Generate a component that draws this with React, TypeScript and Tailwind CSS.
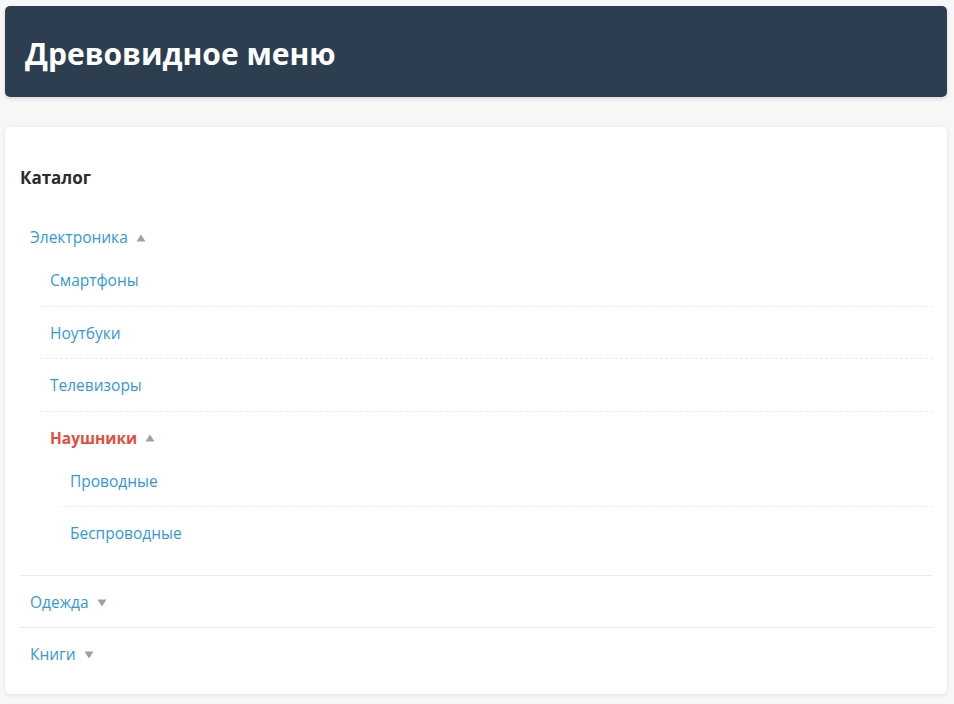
import { FunctionComponent } from "react";

type Node = {
  name: string;
  open?: boolean;
  active?: boolean;
  children?: Node[];
};

const tree: Node[] = [
  {
    name: "Электроника",
    open: true,
    children: [
      { name: "Смартфоны" },
      { name: "Ноутбуки" },
      { name: "Телевизоры" },
      {
        name: "Наушники",
        open: true,
        active: true,
        children: [{ name: "Проводные" }, { name: "Беспроводные" }]
      }
    ]
  },
  { name: "Одежда", children: [{ name: "Мужская" }] },
  { name: "Книги", children: [{ name: "Художественные" }] }
];

const Arrow: FunctionComponent<{ up: boolean }> = ({ up }) => (
  <svg width="10" height="8" viewBox="0 0 10 8" className="ml-[8px]">
    <polygon points={up ? "5,0.5 9.5,7.5 0.5,7.5" : "0.5,0.5 9.5,0.5 5,7.5"} fill="#95a5a6" />
  </svg>
);

const TreeItem: FunctionComponent<{ node: Node; top: boolean }> = ({ node, top }) => {
  const cls = top
    ? "py-[8px] border-b border-solid border-[#e9e9e9] last:border-b-0"
    : "pt-[8px] pb-[8.5px] border-b border-dashed border-[#ececec] last:border-b-0";
  return (
    <li className={cls}>
      <div className="pl-[10px] pt-[6px] pb-[4px] leading-[25px] flex items-center">
        <span
          className={
            node.active
              ? "text-[#e74c3c] font-bold text-[15.5px]"
              : "text-[#3498db] text-[15.5px]"
          }
        >
          {node.name}
        </span>
        {node.children && <Arrow up={!!node.open} />}
      </div>
      {node.children && node.open && (
        <ul className="pl-[20px]">
          {node.children.map((c) => (
            <TreeItem key={c.name} node={c} top={false} />
          ))}
        </ul>
      )}
    </li>
  );
};

const App: FunctionComponent = () => {
  return (
    <div
      className="min-h-screen bg-[#f7f7f7] pl-[5px] pr-[7px] pt-[6px] pb-[9px]"
      style={{ fontFamily: '"Open Sans", "Noto Sans", sans-serif' }}
    >
      <header className="bg-[#2c3e50] rounded-[5px] shadow-[0_2px_4px_rgba(0,0,0,0.12)] pl-[20px] pt-[22px] pb-[18px]">
        <h1 className="text-white font-bold text-[30px] leading-[51px]">Древовидное меню</h1>
      </header>

      <main className="mt-[30px] bg-white rounded-[6px] shadow-[0_1px_4px_rgba(0,0,0,0.1)] pl-[15px] pr-[14px] pb-[15px] pt-[39px]">
        <h3 className="text-[#2c2c2c] font-bold text-[17px] leading-[24px] mb-[21px]">Каталог</h3>
        <ul>
          {tree.map((n) => (
            <TreeItem key={n.name} node={n} top={true} />
          ))}
        </ul>
      </main>
    </div>
  );
};

export default App;
